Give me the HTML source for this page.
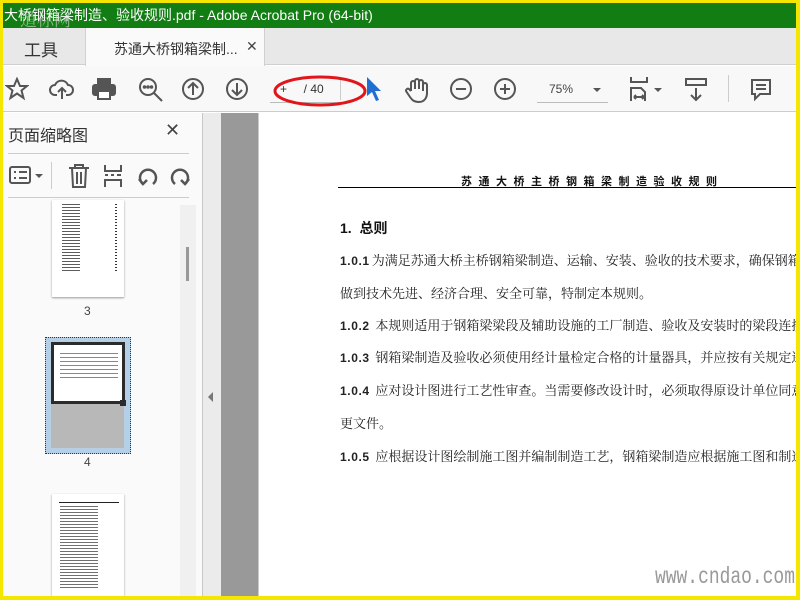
<!DOCTYPE html>
<html><head><meta charset="utf-8"><style>
*{margin:0;padding:0;box-sizing:border-box}
body{width:800px;height:600px;overflow:hidden;position:relative;background:#fff;font-family:"Liberation Sans","Noto Sans CJK SC",sans-serif}
.a{position:absolute}
svg{position:absolute;fill:none;stroke:#555;stroke-width:2}
.t{font-size:13px;color:#222;white-space:nowrap;font-family:"Liberation Sans","Noto Serif CJK SC",serif}
.t b{font-family:"Liberation Sans",sans-serif;font-weight:bold;margin-right:2px;font-size:12px;letter-spacing:.6px}
</style></head><body>
<div class="a" style="left:0;top:0;width:800px;height:28px;background:#127d12"></div>
<div class="a" style="left:4px;top:5px;color:#fff;font-size:14px;white-space:nowrap">大桥钢箱梁制造、验收规则.pdf - Adobe Acrobat Pro (64-bit)</div>
<div class="a" style="left:20px;top:6px;color:rgba(220,220,220,.6);font-size:17px;font-family:'Noto Serif CJK SC',serif">道标网</div>
<div class="a" style="left:0;top:28px;width:800px;height:37px;background:#e8e8e8;border-bottom:1px solid #cfcfcf"></div>
<div class="a" style="left:24px;top:36px;font-size:17px;color:#333">工具</div>
<div class="a" style="left:85px;top:28px;width:180px;height:38px;background:#fafafa;border-left:1px solid #d0d0d0;border-right:1px solid #d0d0d0"></div>
<div class="a" style="left:114px;top:39px;font-size:14px;color:#333">苏通大桥钢箱梁制...</div>
<div class="a" style="left:246px;top:38px;font-size:14px;color:#444">✕</div>
<div class="a" style="left:0;top:66px;width:800px;height:46px;background:#f8f8f8;border-bottom:1px solid #ccc"></div>
<svg style="left:5px;top:77px" width="24" height="24" viewBox="0 0 24 24"><path d="M12 2l3 7h7l-5.5 4.5 2 7.5-6.5-4.5-6.5 4.5 2-7.5L2 9h7z"/></svg>
<svg style="left:49px;top:77px" width="26" height="24" viewBox="0 0 26 24"><path d="M8 18H6a5 5 0 010-10 7 7 0 0113 0 5 5 0 010 10h-2M13 22V11M9 15l4-4 4 4"/></svg>
<svg style="left:92px;top:78px" width="24" height="22" viewBox="0 0 24 22"><rect x="6" y="1" width="12" height="5" fill="#555"/><rect x="1" y="7" width="22" height="10" rx="2" fill="#555"/><rect x="6" y="13" width="12" height="8" fill="#fff"/></svg>
<svg style="left:138px;top:77px" width="26" height="26" viewBox="0 0 26 26"><circle cx="10" cy="10" r="8"/><path d="M16 16l8 8"/><circle cx="6.5" cy="10" r=".8" fill="#555"/><circle cx="10" cy="10" r=".8" fill="#555"/><circle cx="13.5" cy="10" r=".8" fill="#555"/></svg>
<svg style="left:181px;top:77px" width="24" height="24" viewBox="0 0 24 24"><circle cx="12" cy="12" r="10"/><path d="M12 18V6M7 11l5-5 5 5"/></svg>
<svg style="left:225px;top:77px" width="24" height="24" viewBox="0 0 24 24"><circle cx="12" cy="12" r="10"/><path d="M12 6v12M7 13l5 5 5-5"/></svg>
<div class="a" style="left:270px;top:102px;width:70px;height:1px;background:#bbb"></div>
<div class="a" style="left:340px;top:78px;width:1px;height:22px;background:#ccc"></div>
<div class="a" style="left:280px;top:82px;font-size:12px;color:#333">+&nbsp;&nbsp;&nbsp;&nbsp;&nbsp;/ 40</div>
<svg style="left:272px;top:73px;stroke:#e0161b;stroke-width:3" width="96" height="38" viewBox="0 0 96 38"><ellipse cx="48" cy="18" rx="45" ry="14"/></svg>
<svg style="left:366px;top:76px;stroke:none" width="16" height="26" viewBox="0 0 16 26"><path d="M1 1l14 14h-6l4 9-3 1-4-9-5 4z" fill="#1f6fd1"/></svg>
<svg style="left:405px;top:77px" width="24" height="26" viewBox="0 0 24 26"><path d="M6 14V6a2 2 0 014 0v6V4a2 2 0 014 0v8V5a2 2 0 014 0v9V8a2 2 0 014 0v8c0 5-3 9-8 9s-7-2-9-5l-4-6a2 2 0 013-2l2 2"/></svg>
<svg style="left:449px;top:77px" width="24" height="24" viewBox="0 0 24 24"><circle cx="12" cy="12" r="10"/><path d="M7 12h10"/></svg>
<svg style="left:493px;top:77px" width="24" height="24" viewBox="0 0 24 24"><circle cx="12" cy="12" r="10"/><path d="M7 12h10M12 7v10"/></svg>
<div class="a" style="left:549px;top:82px;font-size:12px;color:#444">75%</div>
<div class="a" style="left:593px;top:88px;border:4px solid transparent;border-top:4px solid #555"></div>
<div class="a" style="left:537px;top:102px;width:71px;height:1px;background:#bbb"></div>
<svg style="left:629px;top:76px" width="22" height="26" viewBox="0 0 22 26"><path d="M2 1v5h16V1M2 25v-13h10l4 4v9M5 21h10M5 21l2-2M5 21l2 2M15 21l-2-2M15 21l-2 2"/></svg>
<div class="a" style="left:654px;top:88px;border:4px solid transparent;border-top:4px solid #555"></div>
<svg style="left:684px;top:77px" width="24" height="26" viewBox="0 0 24 26"><rect x="2" y="2" width="20" height="6"/><path d="M12 11v12M7 18l5 5 5-5"/></svg>
<div class="a" style="left:728px;top:75px;width:1px;height:27px;background:#ccc"></div>
<svg style="left:750px;top:78px" width="22" height="24" viewBox="0 0 22 24"><path d="M2 2h18v14H10l-5 5v-5H2z M6 7h10M6 11h10"/></svg>
<!-- left panel -->
<div class="a" style="left:0;top:113px;width:202px;height:487px;background:#fafafa"></div>
<div class="a" style="left:8px;top:122px;font-size:16px;color:#333">页面缩略图</div>
<div class="a" style="left:165px;top:120px;font-size:18px;color:#444">✕</div>
<div class="a" style="left:8px;top:153px;width:181px;height:1px;background:#ccc"></div>
<svg style="left:9px;top:166px" width="22" height="18" viewBox="0 0 22 18"><rect x="1" y="1" width="20" height="16" rx="2"/><path d="M5 6h2M10 6h8M5 12h2M10 12h8"/></svg>
<div class="a" style="left:35px;top:174px;border:4px solid transparent;border-top:4px solid #555"></div>
<div class="a" style="left:51px;top:162px;width:1px;height:27px;background:#ccc"></div>
<svg style="left:68px;top:164px" width="22" height="24" viewBox="0 0 22 24"><path d="M1 4h20M7 4V1h8v3M4 4l1 19h12l1-19M9 8v12M13 8v12"/></svg>
<svg style="left:103px;top:164px" width="20" height="24" viewBox="0 0 20 24"><path d="M2 1v6h16V1M2 23v-7h16v7M2 11h3M8 11h3M14 11h4"/></svg>
<svg style="left:136px;top:164px;stroke-width:2.5" width="24" height="24" viewBox="0 0 24 24"><path d="M7 20A8 8 0 1 1 17 20"/><path d="M3 15l4 5 4-4"/></svg>
<svg style="left:168px;top:164px;stroke-width:2.5" width="24" height="24" viewBox="0 0 24 24"><path d="M7 20A8 8 0 1 1 17 20"/><path d="M13 16l4 4 4-5"/></svg>
<div class="a" style="left:8px;top:197px;width:181px;height:1px;background:#ccc"></div>
<div class="a" style="left:180px;top:205px;width:16px;height:395px;background:#f0f0f0"></div>
<div class="a" style="left:186px;top:247px;width:3px;height:34px;background:#999"></div>
<!-- thumb 3 -->
<div class="a" style="left:52px;top:200px;width:72px;height:97px;background:#fff;box-shadow:0 1px 2px #999"></div>
<div class="a" style="left:62px;top:204px;width:18px;height:68px;background:repeating-linear-gradient(#333 0 1px,transparent 1px 3px);opacity:.8"></div>
<div class="a" style="left:115px;top:204px;width:2px;height:68px;background:repeating-linear-gradient(#333 0 1px,transparent 1px 3px)"></div>
<div class="a" style="left:84px;top:304px;font-size:12px;color:#444">3</div>
<!-- thumb 4 -->
<div class="a" style="left:45px;top:337px;width:86px;height:117px;background:#b4cfe6;border:1px dotted #333"></div>
<div class="a" style="left:51px;top:342px;width:73px;height:106px;background:#b8b8b8"></div>
<div class="a" style="left:51px;top:342px;width:74px;height:62px;background:#fff;border:3px solid #2b2b2b"></div>
<div class="a" style="left:60px;top:353px;width:58px;height:28px;background:repeating-linear-gradient(#555 0 1px,transparent 1px 4px);opacity:.7"></div>
<div class="a" style="left:120px;top:400px;width:6px;height:6px;background:#2b2b2b"></div>
<div class="a" style="left:84px;top:455px;font-size:12px;color:#444">4</div>
<!-- thumb 5 -->
<div class="a" style="left:52px;top:494px;width:72px;height:106px;background:#fff;box-shadow:0 1px 2px #999"></div>
<div class="a" style="left:59px;top:502px;width:60px;height:1px;background:#222"></div>
<div class="a" style="left:60px;top:506px;width:38px;height:82px;background:repeating-linear-gradient(#333 0 1px,transparent 1px 3px);opacity:.7"></div>
<!-- splitter and page -->
<div class="a" style="left:202px;top:113px;width:1px;height:487px;background:#c8c8c8"></div>
<div class="a" style="left:203px;top:113px;width:18px;height:487px;background:#ebebeb"></div>
<div class="a" style="left:208px;top:392px;border:5px solid transparent;border-right:5px solid #777;border-left:0"></div>
<div class="a" style="left:221px;top:113px;width:37px;height:487px;background:#999"></div>
<div class="a" style="left:258px;top:113px;width:1px;height:487px;background:#ccc"></div>
<div class="a" style="left:461px;top:173px;font-size:11px;font-weight:bold;letter-spacing:6.5px;color:#111;white-space:nowrap">苏通大桥主桥钢箱梁制造验收规则</div>
<div class="a" style="left:338px;top:187px;width:462px;height:1px;background:#000"></div>
<div class="a" style="left:340px;top:218px;font-size:14px;font-weight:bold;color:#111;white-space:nowrap"><span style="font-family:'Liberation Sans'">1.</span>&nbsp;&nbsp;总则</div>
<div class="a t" style="left:340px;top:250px"><b>1.0.1</b>为满足苏通大桥主桥钢箱梁制造、运输、安装、验收的技术要求，确保钢箱梁</div>
<div class="a t" style="left:340px;top:283px">做到技术先进、经济合理、安全可靠，特制定本规则。</div>
<div class="a t" style="left:340px;top:315px"><b>1.0.2</b> 本规则适用于钢箱梁梁段及辅助设施的工厂制造、验收及安装时的梁段连接。</div>
<div class="a t" style="left:340px;top:347px"><b>1.0.3</b> 钢箱梁制造及验收必须使用经计量检定合格的计量器具，并应按有关规定进行</div>
<div class="a t" style="left:340px;top:380px"><b>1.0.4</b> 应对设计图进行工艺性审查。当需要修改设计时，必须取得原设计单位同意并</div>
<div class="a t" style="left:340px;top:413px">更文件。</div>
<div class="a t" style="left:340px;top:446px"><b>1.0.5</b> 应根据设计图绘制施工图并编制制造工艺，钢箱梁制造应根据施工图和制造工</div>
<div class="a" style="left:655px;top:564px;font-size:23px;color:#999;font-family:'Liberation Mono',monospace;transform:scaleX(.78);transform-origin:0 0;white-space:nowrap">www.cndao.com</div>
<!-- yellow frame -->
<div class="a" style="left:0;top:0;width:800px;height:600px;border:3px solid #f5e600;border-right-width:4px;border-bottom-width:4px"></div>
</body></html>
